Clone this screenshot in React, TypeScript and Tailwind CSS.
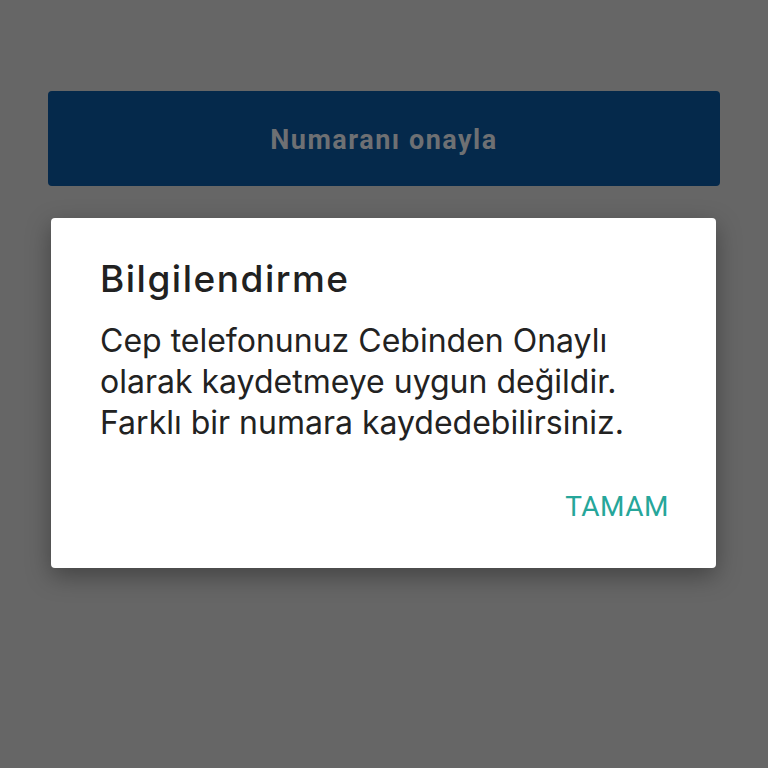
export default function App() {
  return (
    <div className="min-h-[768px] w-full bg-[#666666] pt-[91px]">
      <div className="mx-[48px] flex h-[95px] items-center justify-center rounded-[4px] bg-[#05294b] pt-[4px]">
        <span className="font-['Roboto',sans-serif] text-[27px] font-bold tracking-[1.5px] text-[#6e7073]">
          Numaranı onayla
        </span>
      </div>
      <div className="ml-[51px] mr-[52px] mt-[32px] flex h-[350px] flex-col rounded-[4px] bg-white pl-[49px] pr-[47px] pt-[38px] shadow-[0_8px_24px_rgba(0,0,0,0.35)] font-['Inter',sans-serif]">
        <h2 className="text-[37px] font-medium leading-[46px] tracking-[1.5px] text-[#212121]">Bilgilendirme</h2>
        <p className="mt-[18px] text-[32px] leading-[41px] text-[#222222]">
          Cep telefonunuz Cebinden Onaylı
          <br />
          olarak kaydetmeye uygun değildir.
          <br />
          Farklı bir numara kaydedebilirsiniz.
        </p>
        <div className="mt-[46px] flex justify-end">
          <button className="font-['Roboto',sans-serif] text-[28px] leading-[36px] tracking-[0.5px] text-[#26a69a]">
            TAMAM
          </button>
        </div>
      </div>
    </div>
  );
}
